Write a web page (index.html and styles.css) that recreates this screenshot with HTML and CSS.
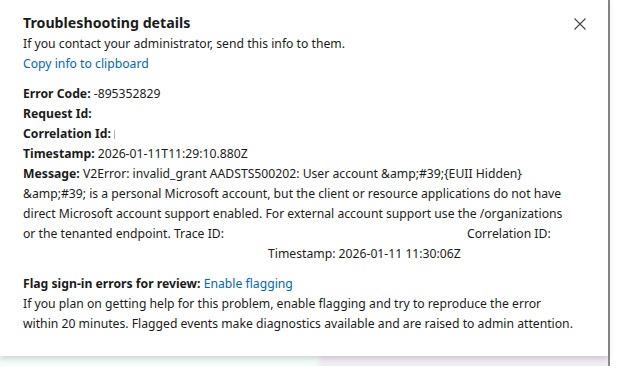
FILE: index.html
```html
<!DOCTYPE html>
<html>
<head>
<meta charset="utf-8">
<link rel="stylesheet" href="styles.css">
</head>
<body>
<div class="frame">
  <div class="panel">
    <div class="header">
      <div class="title">Troubleshooting details</div>
      <button class="close" aria-label="Close">
        <svg width="12" height="12" viewBox="0 0 12 12"><path d="M0.5 0.5 L11.5 11.5 M11.5 0.5 L0.5 11.5" stroke="#444" stroke-width="1.1" fill="none"/></svg>
      </button>
    </div>
    <div class="line">If you contact your administrator, send this info to them.</div>
    <div class="line"><a class="link" href="#">Copy info to clipboard</a></div>
    <div class="details">
      <div class="line"><b>Error Code:</b> -895352829</div>
      <div class="line"><b>Request Id:</b></div>
      <div class="line"><b>Correlation Id:</b> <span class="hidden-mark"></span></div>
      <div class="line"><b>Timestamp:</b> 2026-01-11T11:29:10.880Z</div>
      <div class="line"><b>Message:</b> V2Error: invalid_grant AADSTS500202: User account &amp;amp;#39;{EUII Hidden}</div>
      <div class="line">&amp;amp;#39; is a personal Microsoft account, but the client or resource applications do not have</div>
      <div class="line">direct Microsoft account support enabled. For external account support use the /organizations</div>
      <div class="line"><span class="trace">or the tenanted endpoint. Trace ID:</span><span>Correlation ID:</span></div>
      <div class="line indent">Timestamp: 2026-01-11 11:30:06Z</div>
    </div>
    <div class="flag">
      <div class="line"><b>Flag sign-in errors for review:</b> <a class="link" href="#">Enable flagging</a></div>
      <div class="line">If you plan on getting help for this problem, enable flagging and try to reproduce the error</div>
      <div class="line">within 20 minutes. Flagged events make diagnostics available and are raised to admin attention.</div>
    </div>
  </div>
  <div class="strip"></div>
</div>
</body>
</html>
```
FILE: styles.css
```css
html, body {
  margin: 0;
  padding: 0;
  background: #ffffff;
}
body {
  font-family: "Noto Sans", "Open Sans", sans-serif;
  font-size: 12.2px;
  color: #1b1b1b;
}
.frame {
  width: 608px;
  height: 366px;
  border-right: 2px solid #8c8c8c;
  display: flex;
  flex-direction: column;
}
.panel {
  height: 356px;
  box-sizing: border-box;
  padding: 12px 0 0 23px;
  background: #ffffff;
  position: relative;
  z-index: 1;
  box-shadow: 0 2px 6px rgba(0,0,0,0.18);
}
.header {
  display: flex;
  align-items: center;
  justify-content: space-between;
  padding-right: 22px;
  height: 22px;
}
.title {
  font-size: 14.2px;
  font-weight: 700;
  line-height: 22px;
}
.close {
  border: 0;
  background: none;
  padding: 0;
  width: 12px;
  height: 12px;
  display: flex;
  margin-top: 1px;
}
.line {
  line-height: 20px;
  white-space: nowrap;
}
.link {
  color: #0067b8;
  text-decoration: none;
}
.details {
  margin-top: 10px;
}
.trace {
  display: inline-block;
  width: 444px;
}
.indent {
  padding-left: 245px;
}
.hidden-mark {
  display: inline-block;
  width: 1px;
  height: 9px;
  background: #b0b0b0;
  vertical-align: -1px;
}
.flag {
  margin-top: 10px;
}
.strip {
  height: 10px;
  background: linear-gradient(100deg, #f3fbf9 0%, #f3fbf9 52%, #f1ebf4 53%, #f1ebf4 100%);
}
```
